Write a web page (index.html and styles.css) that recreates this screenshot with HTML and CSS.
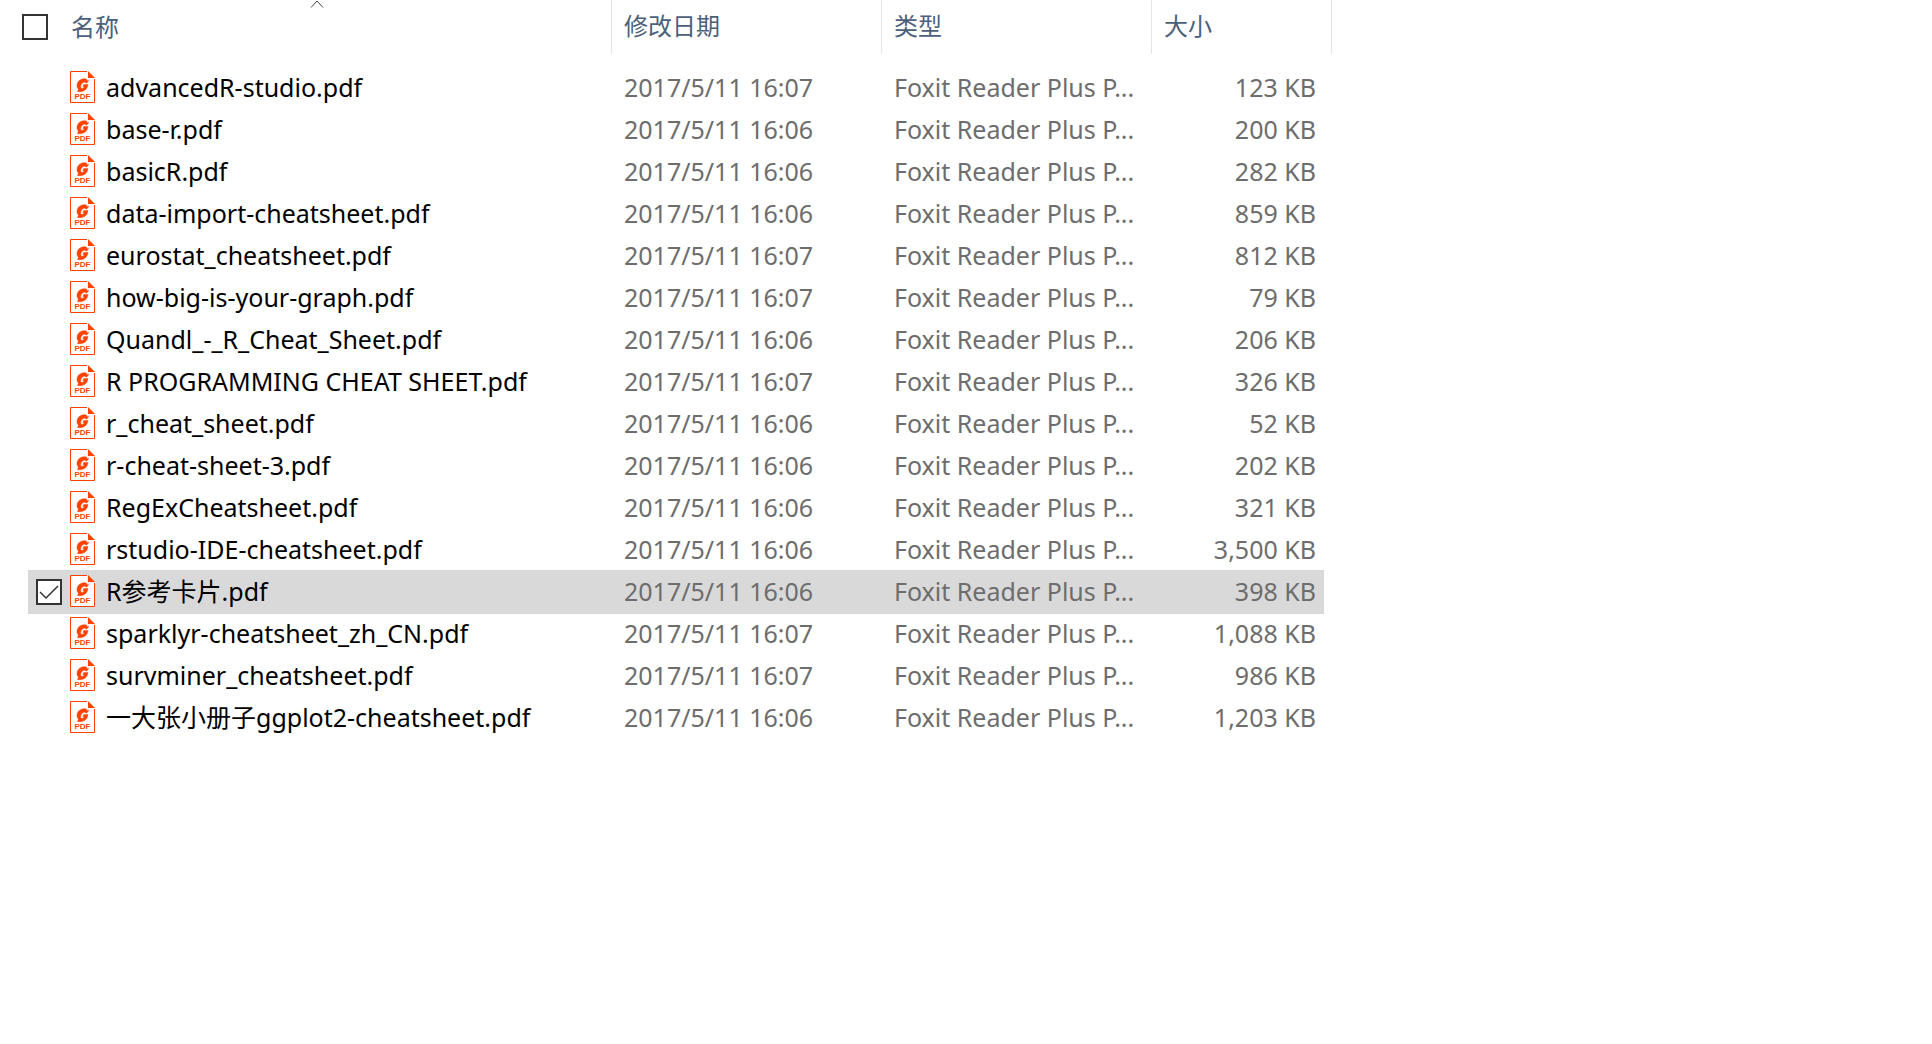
FILE: index.html
```html
<!DOCTYPE html>
<html lang="zh-CN">
<head>
    <meta charset="UTF-8">
    <meta name="viewport" content="width=device-width, initial-scale=1.0">
    <title>文件列表</title>
    <link rel="stylesheet" href="styles.css">
</head>
<body>
    <table class="files">
        <thead>
            <tr>
                <th class="name"><input type="checkbox" aria-label="全选"><span>名称</span>
                    <svg class="sort" width="14" height="9" viewBox="0 0 14 9"><path d="M1 7.5L7 1L13 7.5" fill="none" stroke="#444"/></svg>
                </th>
                <th>修改日期</th>
                <th>类型</th>
                <th>大小</th>
            </tr>
        </thead>
        <tbody></tbody>
    </table>

    <script>
        const files = [
            ["advancedR-studio.pdf", "16:07", "123"],
            ["base-r.pdf", "16:06", "200"],
            ["basicR.pdf", "16:06", "282"],
            ["data-import-cheatsheet.pdf", "16:06", "859"],
            ["eurostat_cheatsheet.pdf", "16:07", "812"],
            ["how-big-is-your-graph.pdf", "16:07", "79"],
            ["Quandl_-_R_Cheat_Sheet.pdf", "16:06", "206"],
            ["R PROGRAMMING CHEAT SHEET.pdf", "16:07", "326"],
            ["r_cheat_sheet.pdf", "16:06", "52"],
            ["r-cheat-sheet-3.pdf", "16:06", "202"],
            ["RegExCheatsheet.pdf", "16:06", "321"],
            ["rstudio-IDE-cheatsheet.pdf", "16:06", "3,500"],
            ["R参考卡片.pdf", "16:06", "398", true],
            ["sparklyr-cheatsheet_zh_CN.pdf", "16:07", "1,088"],
            ["survminer_cheatsheet.pdf", "16:07", "986"],
            ["一大张小册子ggplot2-cheatsheet.pdf", "16:06", "1,203"]
        ];

        const pdfIcon = `
            <svg class="icon" width="25" height="32" viewBox="0 0 25 32">
                <path d="M.5 .5H17.5V7.5H24.5V31.5H.5Z" fill="#fff"/>
                <path d="M17 .5H.5V31.5H24.5V8" fill="none" stroke="#ff4200"/>
                <path d="M18 0L25 7H18Z" fill="#ff4200"/>
                <path d="M16.5 8C12 6.8 7 9.5 7 14.5C7 16.3 7.6 17.5 8.5 18.2C8.1 19.2 7.8 19.8 7.3 20.5C12 21.5 17.5 19.5 18 13.5H13.7L12.8 15.5H14.3C13.7 17 12.6 17.6 11.6 17.3C9.8 16.6 10.8 11.6 14.3 11.2C15.2 11.1 15.8 11.6 16.3 12.2C17.6 11.5 18.3 10.5 18.8 9.3L17 9.7Z" fill="#ff4200" stroke="#ff4200" stroke-width=".4"/>
                <text x="12.5" y="28" text-anchor="middle">PDF</text>
            </svg>`;

        const tbody = document.querySelector('.files tbody');

        tbody.innerHTML = files.map(([name, time, size, selected], i) => `
            <tr${selected ? ' class="selected"' : ''}>
                <td class="name">
                    <input type="checkbox" id="file${i}"${selected ? ' checked' : ''}>
                    ${pdfIcon}
                    <label for="file${i}">${name}</label>
                </td>
                <td>2017/5/11 ${time}</td>
                <td>Foxit Reader Plus P...</td>
                <td class="size">${size} KB</td>
            </tr>`).join('');

        tbody.addEventListener('change', (e) => {
            e.target.closest('tr').classList.toggle('selected', e.target.checked);
        });
    </script>
</body>
</html>
```
FILE: styles.css
```css
*{
    margin: 0;
    padding: 0;
    box-sizing: border-box;
}
body{
    background-color: #fff;
    font-family: "Noto Sans", "Noto Sans CJK SC", sans-serif;
    font-size: 25px;
}
.files{
    display: block;
    margin-right: 600px;
}
.files thead, .files tbody{
    display: block;
}
.files tr{
    display: grid;
    grid-template-columns: minmax(0, 1fr) 270px 270px 180px;
}
.files th{
    height: 54px;
    padding-left: 12px;
    border-right: 1px solid #e5e5e5;
    font-size: 24px;
    font-weight: normal;
    line-height: 52px;
    text-align: left;
    color: #4c607a;
}
.files thead tr{
    padding-left: 22px;
}
.files th.name{
    position: relative;
    display: flex;
    align-items: center;
    gap: 23px;
    padding-left: 0;
}
.sort{
    position: absolute;
    top: 0;
    left: 50%;
    transform: translateX(-50%);
}
.files tbody{
    padding: 13px 8px 0 28px;
}
.files tbody tr{
    grid-template-columns: minmax(0, 1fr) 270px 270px 172px;
}
.files td{
    height: 42px;
    padding: 0 8px 0 12px;
    line-height: 40px;
    white-space: nowrap;
    color: #6d6d6d;
}
.files td.name{
    display: flex;
    align-items: center;
    padding: 0 8px;
    color: #000;
}
.files td label{
    height: 42px;
}
.files .size{
    text-align: right;
}
.files .selected{
    background-color: #d9d9d9;
    box-shadow: 0 1px #d9d9d9, 0 -1px #d9d9d9;
}
.icon{
    flex: none;
    margin: 0 11px 2px 8px;
}
.icon text{
    font-family: "Liberation Sans", sans-serif;
    font-size: 8px;
    font-weight: bold;
    fill: #ff4200;
}
input[type='checkbox']{
    appearance: none;
    flex: none;
    width: 26px;
    height: 26px;
    border: 2px solid #333;
    background-color: #fff;
}
td input[type='checkbox']{
    opacity: 0;
}
tr:hover input[type='checkbox'], td input[type='checkbox']:checked{
    opacity: 1;
}
input[type='checkbox']:checked{
    background-image: url("data:image/svg+xml,%3Csvg xmlns='http://www.w3.org/2000/svg' viewBox='0 0 22 22'%3E%3Cpath d='M2 11L8 17L20 5' fill='none' stroke='%23333' stroke-width='1.5'/%3E%3C/svg%3E");
}
```
